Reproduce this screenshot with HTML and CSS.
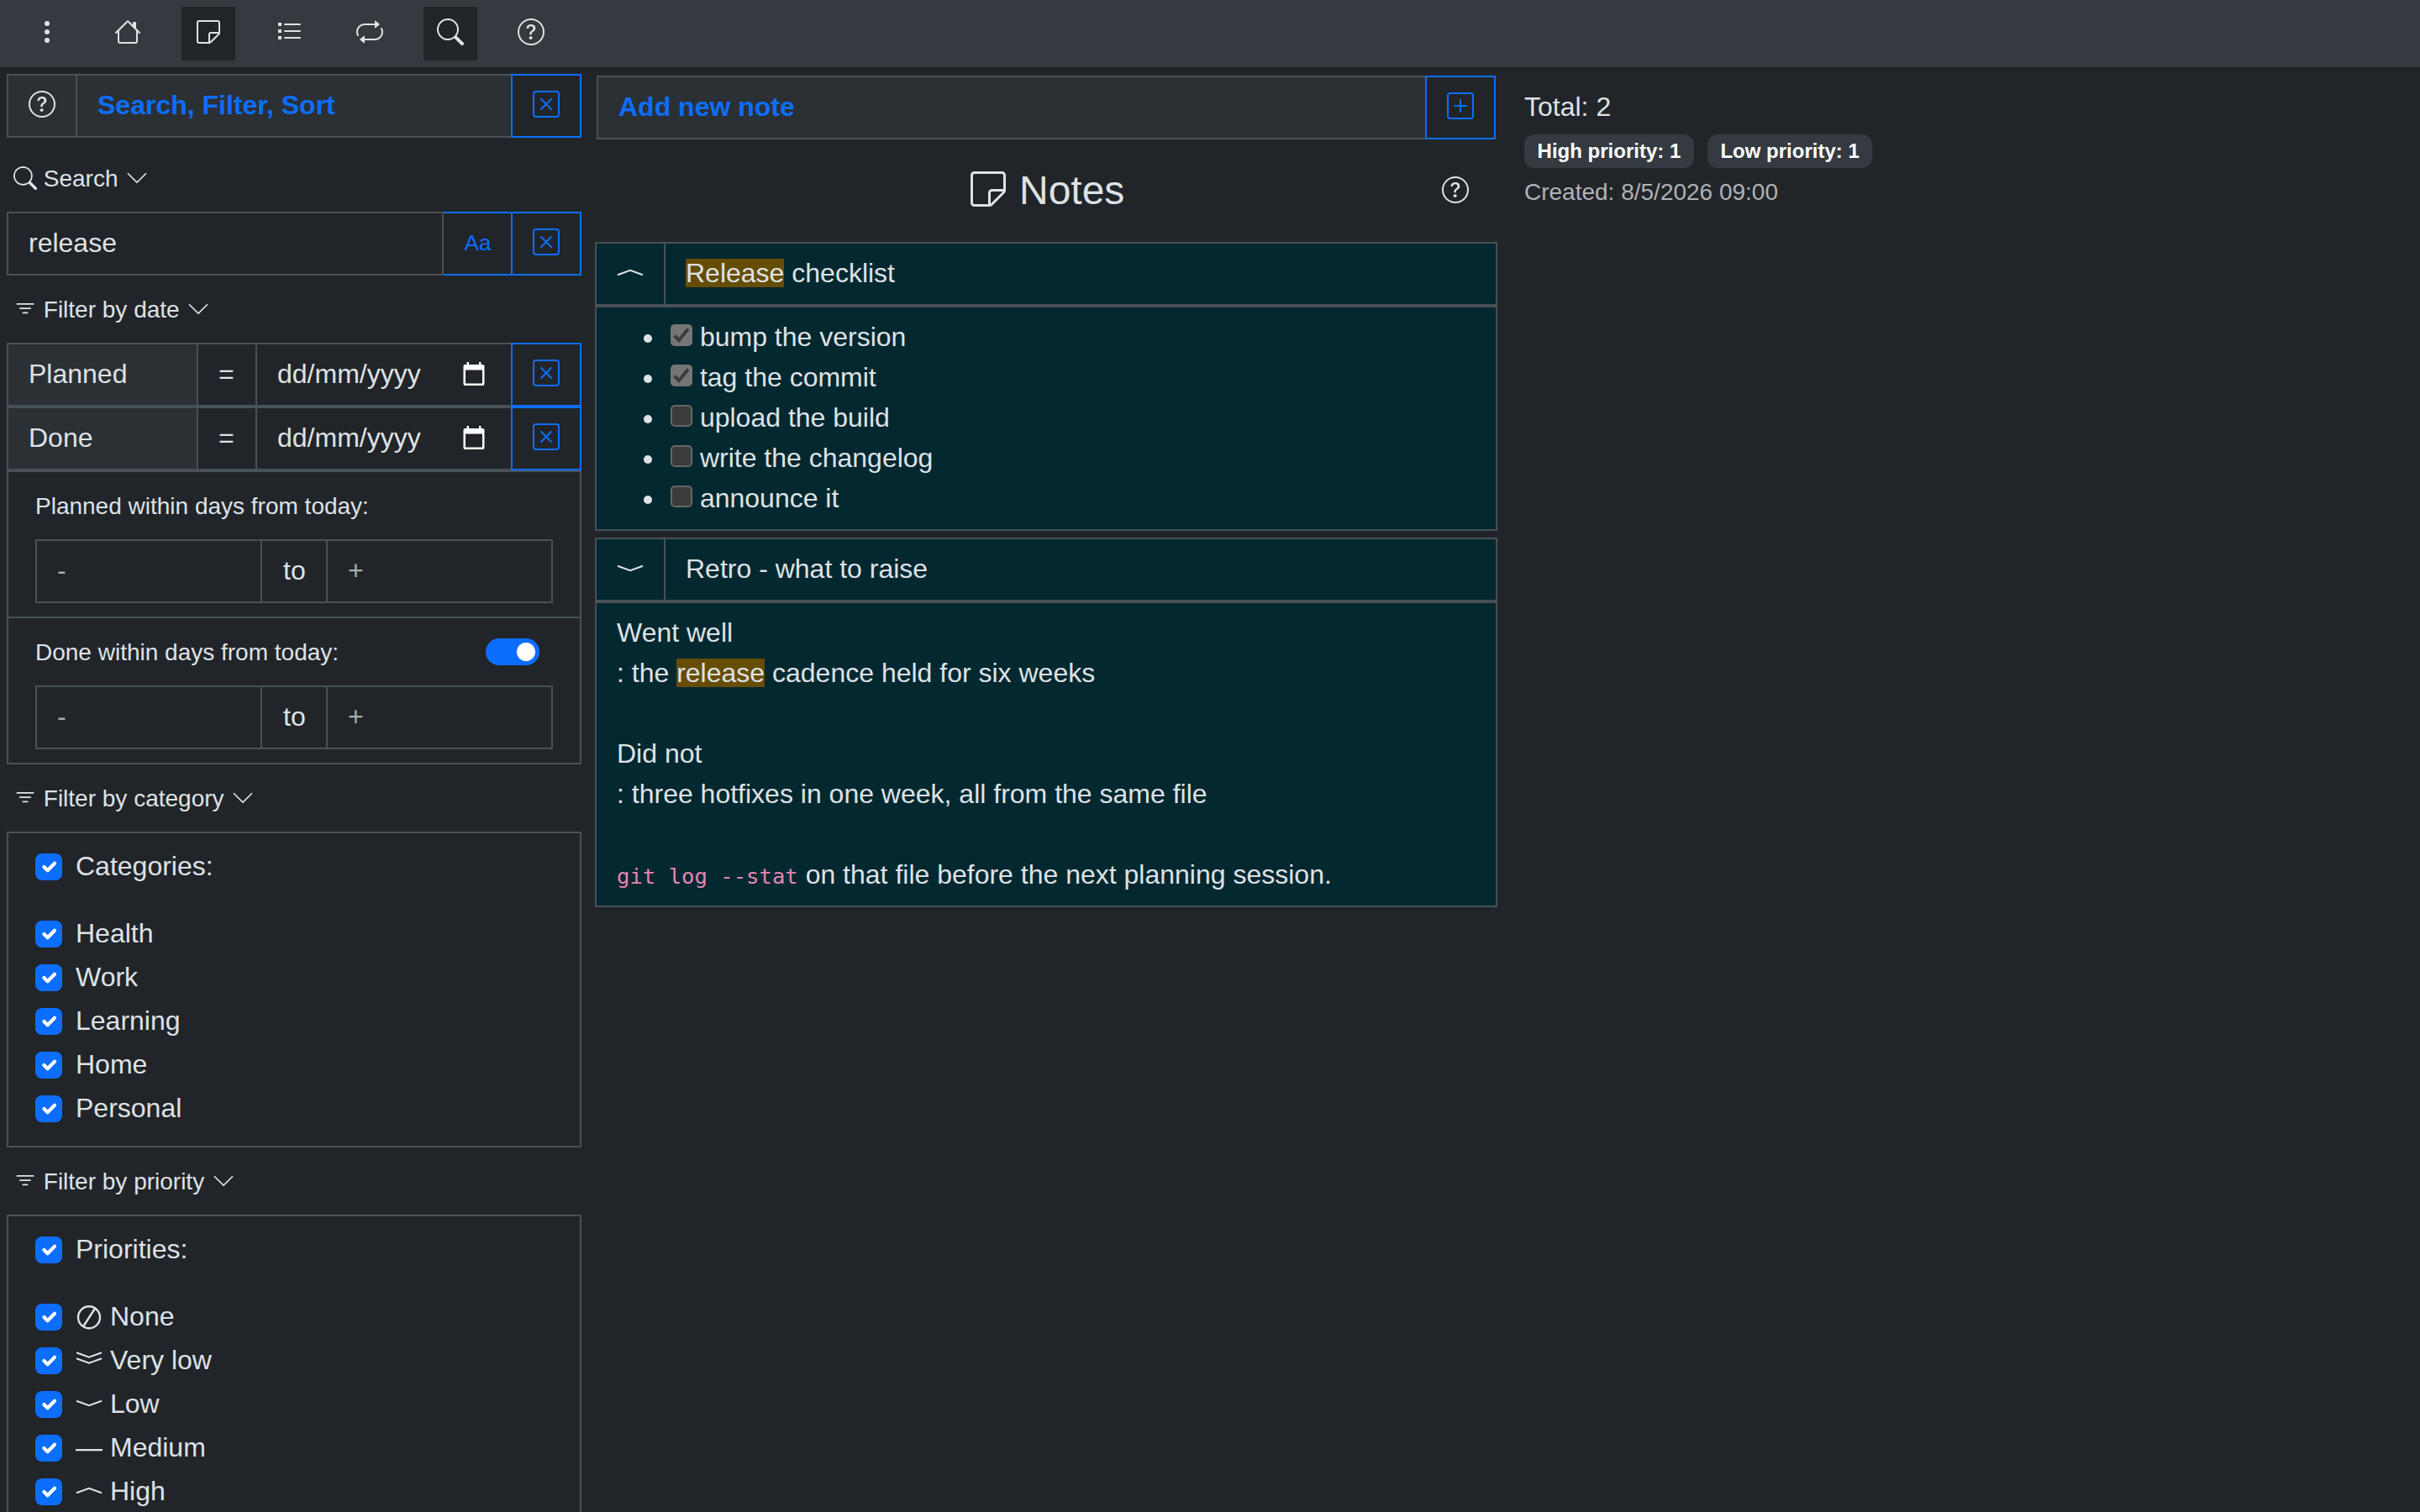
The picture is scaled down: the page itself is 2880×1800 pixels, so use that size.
FILE: index.html
```html
<!DOCTYPE html>
<html lang="en">
<head>
    <meta charset="UTF-8">
    <meta name="viewport" content="width=device-width, initial-scale=1.0">
    <title>Notes</title>
    <link rel="stylesheet" href="styles.css">
</head>
<body>
    <svg class="sprite" xmlns="http://www.w3.org/2000/svg">
        <symbol id="dots" viewBox="0 0 16 16"><path d="M9.5 13a1.5 1.5 0 1 1-3 0 1.5 1.5 0 0 1 3 0m0-5a1.5 1.5 0 1 1-3 0 1.5 1.5 0 0 1 3 0m0-5a1.5 1.5 0 1 1-3 0 1.5 1.5 0 0 1 3 0"/></symbol>
        <symbol id="house" viewBox="0 0 16 16"><path d="M8.707 1.5a1 1 0 0 0-1.414 0L.646 8.146a.5.5 0 0 0 .708.708L2 8.207V13.5A1.5 1.5 0 0 0 3.5 15h9a1.5 1.5 0 0 0 1.5-1.5V8.207l.646.647a.5.5 0 0 0 .708-.708L13 5.793V2.5a.5.5 0 0 0-.5-.5h-1a.5.5 0 0 0-.5.5v1.293zM13 7.207V13.5a.5.5 0 0 1-.5.5h-9a.5.5 0 0 1-.5-.5V7.207l5-5z"/></symbol>
        <symbol id="sticky" viewBox="0 0 16 16"><path d="M2.5 1A1.5 1.5 0 0 0 1 2.5v11A1.5 1.5 0 0 0 2.5 15h6.086a1.5 1.5 0 0 0 1.06-.44l4.915-4.914A1.5 1.5 0 0 0 15 8.586V2.5A1.5 1.5 0 0 0 13.5 1zM2 2.5a.5.5 0 0 1 .5-.5h11a.5.5 0 0 1 .5.5V8H9.5A1.5 1.5 0 0 0 8 9.5V14H2.5a.5.5 0 0 1-.5-.5zm7 11.293V9.5a.5.5 0 0 1 .5-.5h4.293z"/></symbol>
        <symbol id="list" viewBox="0 0 16 16"><path d="M1.5 2.5h2v2h-2zM1.5 6.5h2v2h-2zM1.5 10.5h2v2h-2zM5.5 3h9a.5.5 0 0 1 0 1h-9a.5.5 0 0 1 0-1M5.5 7h9a.5.5 0 0 1 0 1h-9a.5.5 0 0 1 0-1M5.5 11h9a.5.5 0 0 1 0 1h-9a.5.5 0 0 1 0-1"/></symbol>
        <symbol id="repeat" viewBox="0 0 16 16"><path d="M11 5.466V4H5a4 4 0 0 0-3.584 5.777.5.5 0 1 1-.896.446A5 5 0 0 1 5 3h6V1.534a.25.25 0 0 1 .41-.192l2.36 1.966c.12.1.12.284 0 .384l-2.36 1.966a.25.25 0 0 1-.41-.192m3.81.086a.5.5 0 0 1 .67.225A5 5 0 0 1 11 13H5v1.466a.25.25 0 0 1-.41.192l-2.36-1.966a.25.25 0 0 1 0-.384l2.36-1.966a.25.25 0 0 1 .41.192V12h6a4 4 0 0 0 3.585-5.777.5.5 0 0 1 .225-.67z"/></symbol>
        <symbol id="search" viewBox="0 0 16 16"><path d="M11.742 10.344a6.5 6.5 0 1 0-1.397 1.398h-.001q.044.06.098.115l3.85 3.85a1 1 0 0 0 1.415-1.414l-3.85-3.85a1 1 0 0 0-.115-.1zM12 6.5a5.5 5.5 0 1 1-11 0 5.5 5.5 0 0 1 11 0"/></symbol>
        <symbol id="question" viewBox="0 0 16 16"><path d="M8 15A7 7 0 1 1 8 1a7 7 0 0 1 0 14m0 1A8 8 0 1 0 8 0a8 8 0 0 0 0 16"/><path d="M5.255 5.786a.237.237 0 0 0 .241.247h.825c.138 0 .248-.113.266-.25.09-.656.54-1.134 1.342-1.134.686 0 1.314.343 1.314 1.168 0 .635-.374.927-.965 1.371-.673.489-1.206 1.06-1.168 1.987l.003.217a.25.25 0 0 0 .25.246h.811a.25.25 0 0 0 .25-.25v-.105c0-.718.273-.927 1.01-1.486.609-.463 1.244-.977 1.244-2.056 0-1.511-1.276-2.241-2.673-2.241-1.267 0-2.655.59-2.75 2.286m1.557 5.763c0 .533.425.927 1.01.927.609 0 1.028-.394 1.028-.927 0-.552-.42-.94-1.029-.94-.584 0-1.009.388-1.009.94"/></symbol>
        <symbol id="x-square" viewBox="0 0 16 16"><path d="M14 1a1 1 0 0 1 1 1v12a1 1 0 0 1-1 1H2a1 1 0 0 1-1-1V2a1 1 0 0 1 1-1zM2 0a2 2 0 0 0-2 2v12a2 2 0 0 0 2 2h12a2 2 0 0 0 2-2V2a2 2 0 0 0-2-2z"/><path d="M4.646 4.646a.5.5 0 0 1 .708 0L8 7.293l2.646-2.647a.5.5 0 0 1 .708.708L8.707 8l2.647 2.646a.5.5 0 0 1-.708.708L8 8.707l-2.646 2.647a.5.5 0 0 1-.708-.708L7.293 8 4.646 5.354a.5.5 0 0 1 0-.708"/></symbol>
        <symbol id="plus-square" viewBox="0 0 16 16"><path d="M14 1a1 1 0 0 1 1 1v12a1 1 0 0 1-1 1H2a1 1 0 0 1-1-1V2a1 1 0 0 1 1-1zM2 0a2 2 0 0 0-2 2v12a2 2 0 0 0 2 2h12a2 2 0 0 0 2-2V2a2 2 0 0 0-2-2z"/><path d="M8 4a.5.5 0 0 1 .5.5v3h3a.5.5 0 0 1 0 1h-3v3a.5.5 0 0 1-1 0v-3h-3a.5.5 0 0 1 0-1h3v-3A.5.5 0 0 1 8 4"/></symbol>
        <symbol id="chevron" viewBox="0 0 16 16"><path d="M1.646 4.646a.5.5 0 0 1 .708 0L8 10.293l5.646-5.647a.5.5 0 0 1 .708.708l-6 6a.5.5 0 0 1-.708 0l-6-6a.5.5 0 0 1 0-.708"/></symbol>
        <symbol id="filter" viewBox="0 0 16 16"><path d="M6 10.5a.5.5 0 0 1 .5-.5h3a.5.5 0 0 1 0 1h-3a.5.5 0 0 1-.5-.5m-2-3a.5.5 0 0 1 .5-.5h7a.5.5 0 0 1 0 1h-7a.5.5 0 0 1-.5-.5m-2-3a.5.5 0 0 1 .5-.5h11a.5.5 0 0 1 0 1h-11a.5.5 0 0 1-.5-.5"/></symbol>
        <symbol id="calendar" viewBox="0 0 26 28"><path fill-rule="evenodd" d="M4.500 0h2.500v3h12V0h2.500v3H23.500a2 2 0 0 1 2 2v21a2 2 0 0 1-2 2h-21a2 2 0 0 1-2-2V5a2 2 0 0 1 2-2h2zM3 9.500v16h20v-16z"/></symbol>
        <symbol id="check" viewBox="0 0 20 20"><path fill="none" stroke="#fff" stroke-linecap="round" stroke-linejoin="round" stroke-width="3" d="m6 10 3 3 6-6"/></symbol>
        <symbol id="tick" viewBox="0 0 26 26"><path fill="none" stroke="#3b3b3b" stroke-width="4" d="M4.500 13.500l5.500 5.500L21 5.500"/></symbol>
        <!-- priority marks, 32 wide on a 48 line -->
        <symbol id="prio-none" viewBox="0 0 32 48"><path fill="none" stroke="currentColor" stroke-width="2.400" d="M29 24.300a13 13 0 1 1-26 0a13 13 0 0 1 26 0zM9.500 34.500L22.500 14.500"/></symbol>
        <symbol id="prio-very-low" viewBox="0 0 32 48"><path fill="none" stroke="currentColor" stroke-width="2" d="M1 14.300l15 5.500l15-5.500M1 21.300l15 5.500l15-5.500"/></symbol>
        <symbol id="prio-low" viewBox="0 0 32 48"><path fill="none" stroke="currentColor" stroke-width="2" d="M1 19.800l15 5.300l15-5.300"/></symbol>
        <symbol id="prio-medium" viewBox="0 0 32 48"><path d="M0 25h32v2.300H0z"/></symbol>
        <symbol id="prio-high" viewBox="0 0 32 48"><path fill="none" stroke="currentColor" stroke-width="2" d="M1 25.200l15-5.300l15 5.300"/></symbol>
    </svg>

    <nav class="navbar">
        <a class="nav-btn"><svg class="icon"><use href="#dots"/></svg></a>
        <a class="nav-btn"><svg class="icon"><use href="#house"/></svg></a>
        <a class="nav-btn active"><svg class="icon"><use href="#sticky"/></svg></a>
        <a class="nav-btn"><svg class="icon"><use href="#list"/></svg></a>
        <a class="nav-btn"><svg class="icon"><use href="#repeat"/></svg></a>
        <a class="nav-btn active"><svg class="icon"><use href="#search"/></svg></a>
        <a class="nav-btn"><svg class="icon"><use href="#question"/></svg></a>
    </nav>

    <div class="layout">
        <aside class="sidebar">
            <div class="group first">
                <div class="cell filled"><svg class="icon"><use href="#question"/></svg></div>
                <div class="cell filled title grow">Search, Filter, Sort</div>
                <div class="cell blue"><svg class="icon"><use href="#x-square"/></svg></div>
            </div>

            <div class="section"><small><svg class="icon"><use href="#search"/></svg> Search <svg class="icon arrow"><use href="#chevron"/></svg></small></div>
            <div class="group">
                <div class="cell grow over">release</div>
                <div class="cell blue case">Aa</div>
                <div class="cell blue"><svg class="icon"><use href="#x-square"/></svg></div>
            </div>

            <div class="section"><small><svg class="icon"><use href="#filter"/></svg> Filter by date <svg class="icon arrow"><use href="#chevron"/></svg></small></div>
            <div class="group">
                <div class="cell filled name">Planned</div>
                <div class="cell equals">=</div>
                <div class="cell grow date">dd/mm/yyyy <svg class="calendar"><use href="#calendar"/></svg></div>
                <div class="cell blue"><svg class="icon"><use href="#x-square"/></svg></div>
            </div>
            <div class="group">
                <div class="cell filled name">Done</div>
                <div class="cell equals">=</div>
                <div class="cell grow date">dd/mm/yyyy <svg class="calendar"><use href="#calendar"/></svg></div>
                <div class="cell blue"><svg class="icon"><use href="#x-square"/></svg></div>
            </div>
            <div class="panel range">
                <div class="range-label"><small>Planned within days from today:</small></div>
                <div class="group">
                    <div class="cell grow hint">-</div>
                    <div class="cell to">to</div>
                    <div class="cell grow hint">+</div>
                </div>
            </div>
            <div class="panel range joined">
                <div class="range-label"><small>Done within days from today:</small><span class="switch"></span></div>
                <div class="group">
                    <div class="cell grow hint">-</div>
                    <div class="cell to">to</div>
                    <div class="cell grow hint">+</div>
                </div>
            </div>

            <div class="section"><small><svg class="icon"><use href="#filter"/></svg> Filter by category <svg class="icon arrow"><use href="#chevron"/></svg></small></div>
            <div class="panel">
                <label class="check all"><svg class="box"><use href="#check"/></svg><span>Categories:</span></label>
                <label class="check"><svg class="box"><use href="#check"/></svg><span>Health</span></label>
                <label class="check"><svg class="box"><use href="#check"/></svg><span>Work</span></label>
                <label class="check"><svg class="box"><use href="#check"/></svg><span>Learning</span></label>
                <label class="check"><svg class="box"><use href="#check"/></svg><span>Home</span></label>
                <label class="check"><svg class="box"><use href="#check"/></svg><span>Personal</span></label>
            </div>

            <div class="section"><small><svg class="icon"><use href="#filter"/></svg> Filter by priority <svg class="icon arrow"><use href="#chevron"/></svg></small></div>
            <div class="panel">
                <label class="check all"><svg class="box"><use href="#check"/></svg><span>Priorities:</span></label>
                <label class="check"><svg class="box"><use href="#check"/></svg><svg class="prio"><use href="#prio-none"/></svg><span>None</span></label>
                <label class="check"><svg class="box"><use href="#check"/></svg><svg class="prio"><use href="#prio-very-low"/></svg><span>Very low</span></label>
                <label class="check"><svg class="box"><use href="#check"/></svg><svg class="prio"><use href="#prio-low"/></svg><span>Low</span></label>
                <label class="check"><svg class="box"><use href="#check"/></svg><svg class="prio"><use href="#prio-medium"/></svg><span>Medium</span></label>
                <label class="check"><svg class="box"><use href="#check"/></svg><svg class="prio"><use href="#prio-high"/></svg><span>High</span></label>
            </div>
        </aside>

        <main class="notes">
            <div class="group add">
                <div class="cell filled title grow">Add new note</div>
                <div class="cell blue"><svg class="icon"><use href="#plus-square"/></svg></div>
            </div>
            <header class="heading">
                <h1><svg class="icon"><use href="#sticky"/></svg> Notes</h1>
                <svg class="icon help"><use href="#question"/></svg>
            </header>

            <article class="note">
                <div class="group">
                    <div class="cell toggle"><svg class="prio"><use href="#prio-high"/></svg></div>
                    <div class="cell grow"><mark>Release</mark> checklist</div>
                </div>
                <div class="note-body">
                    <ul>
                        <li><svg class="task done"><use href="#tick"/></svg> bump the version</li>
                        <li><svg class="task done"><use href="#tick"/></svg> tag the commit</li>
                        <li><svg class="task"></svg> upload the build</li>
                        <li><svg class="task"></svg> write the changelog</li>
                        <li><svg class="task"></svg> announce it</li>
                    </ul>
                </div>
            </article>

            <article class="note">
                <div class="group">
                    <div class="cell toggle"><svg class="prio"><use href="#prio-low"/></svg></div>
                    <div class="cell grow">Retro - what to raise</div>
                </div>
                <div class="note-body">
                    <p>Went well<br>: the <mark>release</mark> cadence held for six weeks</p>
                    <p>Did not<br>: three hotfixes in one week, all from the same file</p>
                    <p><code>git log --stat</code> on that file before the next planning session.</p>
                </div>
            </article>
        </main>

        <section class="stats">
            <div class="total">Total: 2</div>
            <div class="badges">
                <span class="badge">High priority: 1</span>
                <span class="badge">Low priority: 1</span>
            </div>
            <div class="created">Created: 8/5/2026 09:00</div>
        </section>
    </div>
</body>
</html>
```

FILE: styles.css
```css
* {
    box-sizing: border-box;
}
body {
    margin: 0;
    height: 1800px;
    overflow: hidden;
    font-family: "Liberation Sans", Arial, sans-serif;
    font-size: 32px;
    line-height: 48px;
    color: #dee2e6;
    background-color: #212529;
}
svg {
    fill: currentColor;
}
.sprite {
    display: none;
}
.icon {
    width: 1em;
    height: 1em;
    vertical-align: -0.125em;
}
small {
    font-size: 28px;
}
.navbar {
    display: flex;
    gap: 32px;
    height: 80px;
    padding: 8px 24px;
    background-color: #343a40;
}
.nav-btn {
    width: 64px;
    height: 64px;
    padding: 14px 16px;
    line-height: 0;
}
.nav-btn.active {
    background-color: #212529;
}
.nav-btn .icon {
    vertical-align: top;
}
.layout {
    display: flex;
    align-items: flex-start;
}
.sidebar {
    width: 692px;
    padding: 8px 0 0 8px;
    flex-shrink: 0;
}

/* input groups */
.group {
    display: flex;
}
.group.first {
    margin-bottom: 8px;
}
.cell {
    height: 76px;
    padding: 11px 24px 13px;
    border: 2px solid #495057;
    white-space: nowrap;
}
.cell + .cell {
    margin-left: -2px;
}
.grow {
    flex: 1 1 0;
}
.filled {
    background-color: #2b3035;
}
.title {
    font-weight: bold;
    color: #0d6efd;
}
.blue {
    width: 84px;
    border-color: #0d6efd;
    color: #0d6efd;
    position: relative;
}
.over {
    position: relative;
    z-index: 1;
}
.case {
    font-size: 26px;
    padding: 11px 0 13px 1px;
    text-align: center;
}
.name {
    width: 228px;
}
.equals {
    width: 72px;
}
.to {
    width: 80px;
    padding-left: 25px;
}
.date {
    display: flex;
    justify-content: space-between;
}
.calendar {
    width: 26px;
    height: 28px;
    margin: 10px 7px 0 0;
    color: #fff;
}
.hint {
    color: #a8abae;
}

/* filter sections */
.section {
    height: 80px;
    padding: 15px 8px 17px;
}
.arrow {
    margin-left: 1px;
}
.panel {
    padding: 16px 32px;
    border: 2px solid #495057;
}
.joined {
    margin-top: -2px;
}
.range-label {
    display: flex;
    justify-content: space-between;
    height: 48px;
    margin-bottom: 16px;
}
.range-label small {
    padding-top: 1px;
}
.switch {
    width: 64px;
    height: 32px;
    margin: 8px 16px 0 0;
    border-radius: 16px;
    background: radial-gradient(circle at 48px 16px, #fff 10.5px, #0d6efd 11.5px);
}
.check {
    display: flex;
    height: 48px;
    margin-bottom: 4px;
}
.check.all {
    margin-bottom: 32px;
}
.check span {
    margin-top: -1px;
}
.box {
    width: 32px;
    height: 32px;
    margin: 8px 16px 0 0;
    padding: 2px;
    border-radius: 8px;
    background-color: #0d6efd;
}
.prio {
    width: 32px;
    height: 48px;
}
.check .prio {
    margin-right: 9px;
}

/* notes */
.notes {
    width: 1074px;
    margin: 8px 0 0 16px;
    flex-shrink: 0;
}
.add {
    margin: 2px 2px 0;
}
.heading {
    display: grid;
    grid-template-columns: 1fr auto 1fr;
    align-items: center;
    height: 122px;
    padding: 0 2px;
}
.heading h1 {
    grid-column: 2;
    margin: 0;
    font-size: 48px;
    font-weight: normal;
    line-height: 58px;
}
.help {
    justify-self: end;
    margin: 0 32px 2px 0;
}
.note {
    margin-bottom: 8px;
}
.note .cell,
.note-body {
    background-color: #032830;
}
.toggle {
    padding: 12px 24px;
    line-height: 0;
}
.note-body {
    padding: 11px 24px 13px;
    border: 2px solid #495057;
}
.note-body ul {
    margin: 0;
    padding-left: 64px;
    list-style: none;
}
.note-body li::before {
    content: "";
    display: inline-block;
    width: 10px;
    height: 10px;
    margin: 0 22px 0 -32px;
    border-radius: 50%;
    background-color: #dee2e6;
    vertical-align: 4px;
}
.note-body p {
    margin: 0 0 48px;
}
.note-body p:last-child {
    margin: 0;
}
.task {
    width: 26px;
    height: 26px;
    border: 2px solid #666;
    border-radius: 5px;
    background-color: #3b3b3b;
    vertical-align: baseline;
}
.task.done {
    border: none;
    background-color: #757575;
}
mark {
    color: inherit;
    background: linear-gradient(#664d03, #664d03) 0 1px / 100% 34px no-repeat;
}
code {
    font-family: "DejaVu Sans Mono", monospace;
    font-size: 25.6px;
    line-height: 1;
    color: #e685b5;
}

/* totals */
.stats {
    padding: 23px 0 0 32px;
}
.badges {
    display: flex;
    gap: 16px;
    margin-top: 9px;
}
.badge {
    height: 40px;
    padding: 8px 15.6px;
    border-radius: 12px;
    font-size: 24px;
    font-weight: bold;
    line-height: 24px;
    color: #fff;
    background-color: #343a40;
}
.created {
    margin-top: 5px;
    font-size: 28px;
    color: #afb2b6;
}
```
